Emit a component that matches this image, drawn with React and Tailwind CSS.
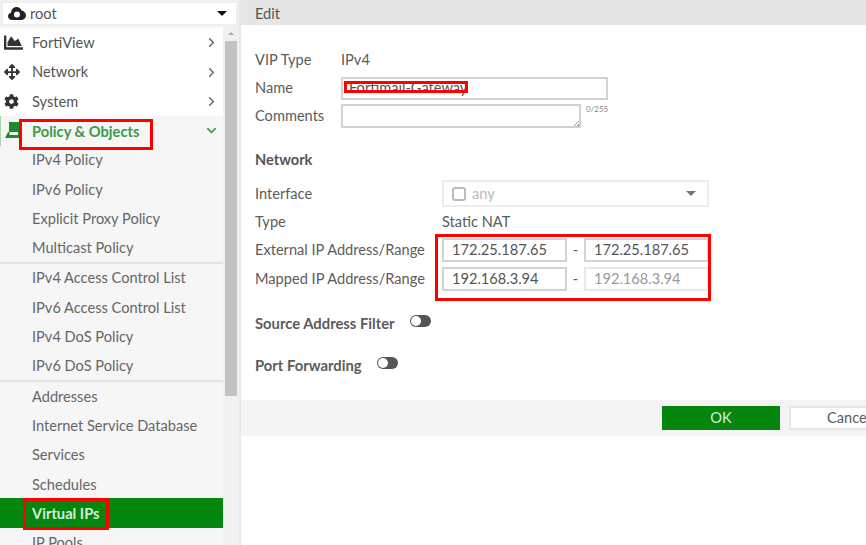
import { ChevronRight, ChevronDown } from "lucide-react";
import { FaCog, FaArrowsAlt, FaChartArea } from "react-icons/fa";

const group1 = ["IPv4 Policy", "IPv6 Policy", "Explicit Proxy Policy", "Multicast Policy"];
const group2 = ["IPv4 Access Control List", "IPv6 Access Control List", "IPv4 DoS Policy", "IPv6 DoS Policy"];
const group3 = ["Addresses", "Internet Service Database", "Services", "Schedules"];

function TopItem({ icon, label }) {
  return (
    <div className="h-[29.3px] flex items-center text-[14.6px] text-[#555] bg-white">
      <span className="w-[32px] pl-[4px] flex items-center text-[#333]">{icon}</span>
      <span className="flex-1">{label}</span>
      <ChevronRight size={15} strokeWidth={2.4} className="mr-[4px] text-[#666]" />
    </div>
  );
}

function SubItem({ label }) {
  return <div className="h-[29.3px] pl-[32px] flex items-center text-[14.6px] text-[#666]">{label}</div>;
}

function Sidebar() {
  return (
    <div className="w-[239px] h-full shrink-0 flex flex-col bg-[#f1f1f1] overflow-hidden">
      <div className="h-[25px] shrink-0 mx-[1px] mt-[1px] px-[5px] flex items-center bg-white border-2 border-[#efefef] text-[14.6px] text-[#555]">
        <svg width="18" height="15" viewBox="0 0 18 15" className="mr-[4px] shrink-0">
          <path
            fillRule="evenodd"
            fill="#222"
            d="M4 14C1.8 14 0 12.4 0 10.3 0 8.5 1.2 7 3 6.700 3.300 3.300 5.600 1 8.500 1c2.300 0 4.200 1.400 5 3.500C16 4.900 18 7 18 9.600 18 12 16 14 13.700 14zM9 5.500a3 3 0 1 0 0 6 3 3 0 0 0 0-6z"
          />
        </svg>
        <span className="flex-1">root</span>
        <span className="w-0 h-0 mr-[4px] border-x-[5px] border-x-transparent border-t-[5px] border-t-[#111]" />
      </div>
      <div className="flex flex-1 min-h-0">
        <div className="w-[223px] pt-[2.35px] bg-[#f6f6f6]">
          <TopItem icon={<FaChartArea size={19} />} label="FortiView" />
          <TopItem icon={<FaArrowsAlt size={16} />} label="Network" />
          <TopItem icon={<FaCog size={15} />} label="System" />
          <div className="h-[29.3px] flex items-center text-[14.7px] font-bold text-[#3c9a48] border-l border-[#a8d5ad]">
            <span className="w-[31px] pl-[3px] flex items-center">
              <svg width="19" height="19" viewBox="0 0 19 19">
                <path d="M5 1h11v10H5z" fill="#1e8a2a" />
                <path d="M4 11h1.500v3H14v-3h2l2 6H1z" fill="#1e8a2a" />
              </svg>
            </span>
            <span className="flex-1">Policy &amp; Objects</span>
            <ChevronDown size={15} strokeWidth={2.4} className="mr-[4px] text-[#3c9a48]" />
          </div>
          {group1.map(item => <SubItem key={item} label={item} />)}
          <div className="border-t border-[#e2e2e2] shadow-[0_-1px_0_#e2e2e2]">
            {group2.map(item => <SubItem key={item} label={item} />)}
          </div>
          <div className="border-t border-[#e2e2e2] shadow-[0_-1px_0_#e2e2e2]">
            {group3.map(item => <SubItem key={item} label={item} />)}
          </div>
          <div className="h-[30px] -mt-[1px] pl-[32px] flex items-center text-[14.7px] font-bold text-[#d5efd8] bg-[#04860f]">
            Virtual IPs
          </div>
          <SubItem label="IP Pools" />
        </div>
        <div className="w-[16px] flex flex-col items-center bg-[#f1f1f1]">
          <span className="w-0 h-0 mt-[6px] border-x-[3px] border-x-transparent border-b-[3px] border-b-[#aaa]" />
          <div className="w-[12px] h-[355px] mt-[6px] bg-[#c2c2c2]" />
        </div>
      </div>
    </div>
  );
}

function Row({ label, labelClass = "", children, className = "" }) {
  return (
    <div className={`flex items-center ${className}`}>
      <span className={`shrink-0 ${labelClass}`}>{label}</span>
      {children}
    </div>
  );
}

function Toggle() {
  return (
    <span className="inline-block w-[21px] h-[12px] rounded-full bg-[#555] relative">
      <span className="absolute left-[1px] top-[1px] w-[10px] h-[10px] rounded-full bg-white" />
    </span>
  );
}

function IpInput({ value, muted }) {
  return (
    <div className={`h-[24px] w-[125px] pl-[8px] flex items-center border-2 ${muted ? "border-[#e8e8e8] text-[#999]" : "border-[#d2d2d2] text-[#555]"}`}>
      {value}
    </div>
  );
}

function Form() {
  return (
    <div className="flex-1 min-w-0 h-full flex flex-col overflow-hidden bg-white text-[14.6px] text-[#5c5c5c] border-l-2 border-[#e8e8e8]">
      <div className="h-[25px] shrink-0 pl-[14px] pt-[2px] flex items-center bg-[#e6e6e6] text-[#555]">Edit</div>
      <div className="h-[375px] shrink-0 pl-[14px] pt-[21px]">
        <Row label="VIP Type" labelClass="w-[86px]" className="h-[28px]">IPv4</Row>
        <Row label="Name" labelClass="w-[86px]" className="h-[28px]">
          <div className="w-[267px] h-[23px] pl-[6px] flex items-center border-2 border-[#d2d2d2] text-[#555]">Fortimail-Gateway</div>
        </Row>
        <Row label="Comments" labelClass="w-[86px]" className="h-[28px]">
          <div className="w-[240px] h-[24px] border-2 border-[#d2d2d2] relative">
            <span className="absolute right-0 bottom-0 w-[6px] h-[6px] bg-[linear-gradient(135deg,transparent_50%,#999_50%,#999_60%,transparent_60%,transparent_75%,#999_75%)]" />
          </div>
          <span className="self-start mt-[1px] ml-[5px] text-[8px] text-[#888]">0/255</span>
        </Row>
        <div className="mt-[15px] h-[30px] flex items-center font-bold text-[#555]">Network</div>
        <Row label="Interface" labelClass="w-[187px]" className="h-[37px]">
          <div className="w-[267px] h-[27px] px-[8px] flex items-center border-2 border-[#ececec] text-[#bbb]">
            <span className="w-[14px] h-[14px] mr-[6px] rounded-[3px] border-2 border-[#bbb]" />
            <span className="flex-1">any</span>
            <span className="w-0 h-0 mr-[3px] border-x-[5px] border-x-transparent border-t-[5px] border-t-[#777]" />
          </div>
        </Row>
        <Row label="Type" labelClass="w-[187px]" className="h-[20px]">Static NAT</Row>
        <Row label="External IP Address/Range" labelClass="w-[187px]" className="h-[28px] mt-[4px]">
          <IpInput value="172.25.187.65" />
          <span className="w-[17px] text-center">-</span>
          <IpInput value="172.25.187.65" />
        </Row>
        <Row label="Mapped IP Address/Range" labelClass="w-[187px]" className="h-[29px]">
          <IpInput value="192.168.3.94" />
          <span className="w-[17px] text-center">-</span>
          <IpInput value="192.168.3.94" muted />
        </Row>
        <div className="mt-[18px] h-[24px] flex items-center font-bold text-[14.8px] gap-[15px]">
          <span>Source Address Filter</span>
          <span className="-mt-[5px] flex"><Toggle /></span>
        </div>
        <div className="mt-[18px] h-[24px] flex items-center font-bold text-[14.8px] gap-[15px]">
          <span>Port Forwarding</span>
          <span className="-mt-[5px] flex"><Toggle /></span>
        </div>
      </div>
      <div className="h-[36px] shrink-0 pt-[6px] pl-[421px] flex items-start gap-[9px] bg-[#f4f4f4]">
        <div className="w-[118px] h-[24px] shrink-0 flex items-center justify-center bg-[#04860f] text-[#d5efd8]">OK</div>
        <div className="w-[100px] h-[24px] shrink-0 pl-[36px] flex items-center bg-white border-2 border-[#e6e6e6]">Cancel</div>
      </div>
    </div>
  );
}

export default function App() {
  return (
    <div className="relative w-[866px] h-[545px] flex overflow-hidden bg-white font-['Lato','Open_Sans',sans-serif]">
      <Sidebar />
      <Form />
      {/* red annotation boxes drawn on top of the screenshot */}
      <div className="absolute left-[19px] top-[119px] w-[134px] h-[31px] border-[3px] border-[#f00]" />
      <div className="absolute left-[23px] top-[498px] w-[86px] h-[32px] border-[3px] border-[#f00]" />
      <div className="absolute left-[344px] top-[81px] w-[124px] h-[12px] border-[3px] border-[#f00]" />
      <div className="absolute left-[435px] top-[234px] w-[276px] h-[67px] border-[3px] border-[#f00]" />
    </div>
  );
}
